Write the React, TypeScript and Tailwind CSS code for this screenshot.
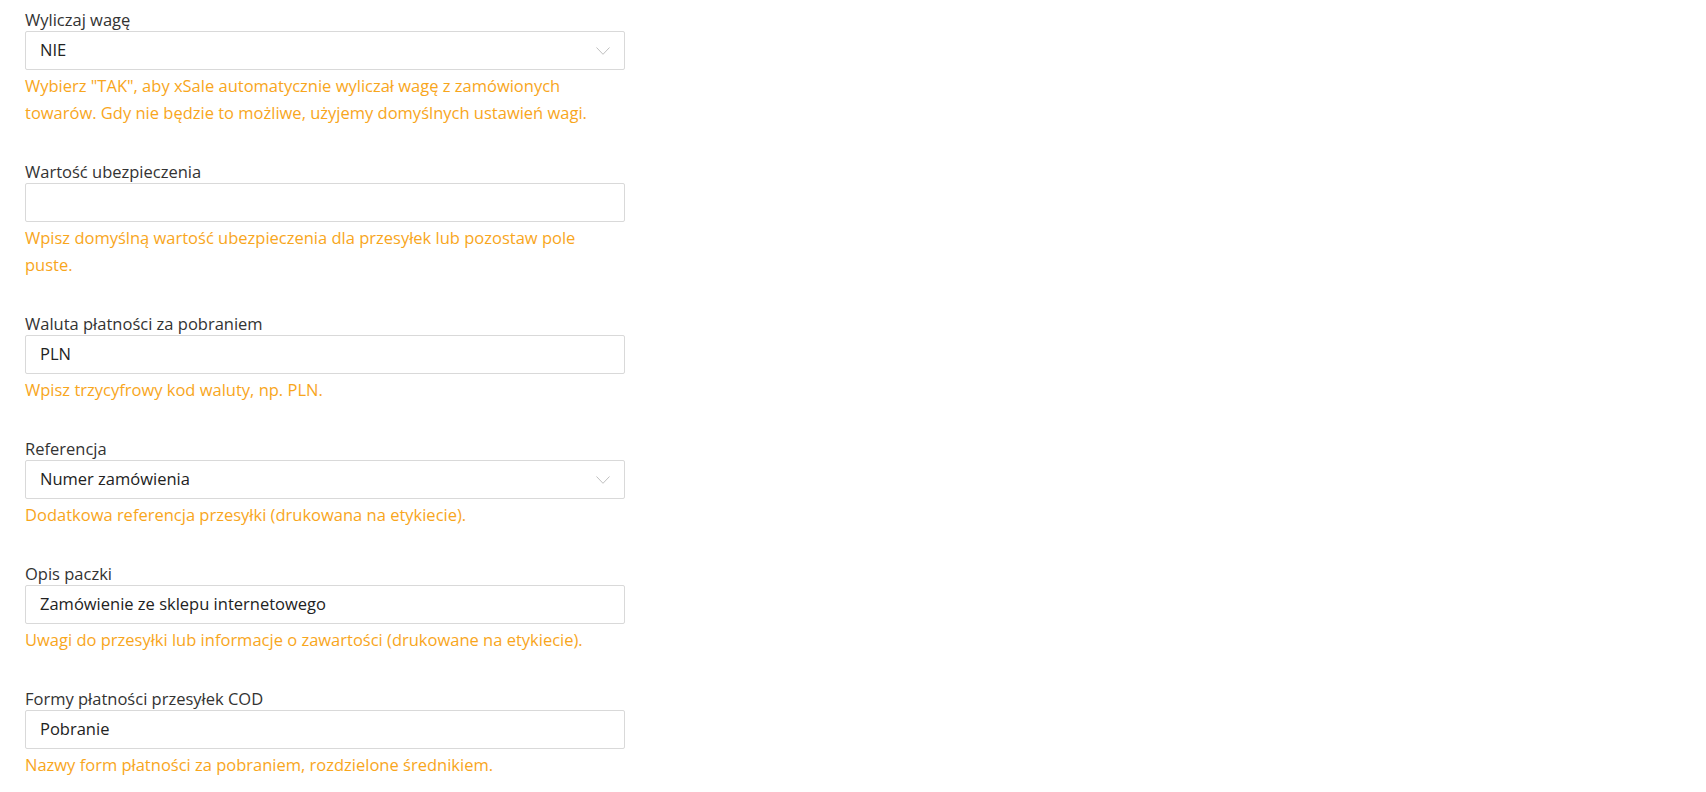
import type { ReactNode } from "react";

interface FieldProps {
  label: string;
  value?: string;
  select?: boolean;
  help: ReactNode;
}

const fields: FieldProps[] = [
  {
    label: "Wyliczaj wagę",
    value: "NIE",
    select: true,
    help: (
      <>
        Wybierz "TAK", aby xSale automatycznie wyliczał wagę z zamówionych
        <br />
        towarów. Gdy nie będzie to możliwe, użyjemy domyślnych ustawień wagi.
      </>
    ),
  },
  {
    label: "Wartość ubezpieczenia",
    value: "",
    help: (
      <>
        Wpisz domyślną wartość ubezpieczenia dla przesyłek lub pozostaw pole
        <br />
        puste.
      </>
    ),
  },
  {
    label: "Waluta płatności za pobraniem",
    value: "PLN",
    help: "Wpisz trzycyfrowy kod waluty, np. PLN.",
  },
  {
    label: "Referencja",
    value: "Numer zamówienia",
    select: true,
    help: "Dodatkowa referencja przesyłki (drukowana na etykiecie).",
  },
  {
    label: "Opis paczki",
    value: "Zamówienie ze sklepu internetowego",
    help: "Uwagi do przesyłki lub informacje o zawartości (drukowane na etykiecie).",
  },
  {
    label: "Formy płatności przesyłek COD",
    value: "Pobranie",
    help: "Nazwy form płatności za pobraniem, rozdzielone średnikiem.",
  },
];

export default function App() {
  return (
    <div className="min-h-screen bg-white pl-[25px] pt-[9px] font-['Open_Sans',sans-serif] text-[16.5px]">
      <div className="flex w-[600px] flex-col gap-[35px]">
        {fields.map((f) => (
          <Field key={f.label} {...f} />
        ))}
      </div>
    </div>
  );
}

function Field({ label, value, select, help }: FieldProps) {
  return (
    <div className="flex flex-col">
      <label className="leading-[22px] text-[#333]">{label}</label>
      <div className="flex h-[39px] items-center justify-between rounded-[2px] border border-[#d9d9d9] bg-white pl-[14px] pr-[14px] text-[#222]">
        <span>{value}</span>
        {select && (
          <svg width="14" height="8" viewBox="0 0 14 8" fill="none">
            <path d="M0.5 0.5 L7 7.3 L13.5 0.5" stroke="#bfbfbf" strokeWidth="1" />
          </svg>
        )}
      </div>
      <p className="mt-[2px] leading-[27px] text-[#f8a61c]">{help}</p>
    </div>
  );
}
